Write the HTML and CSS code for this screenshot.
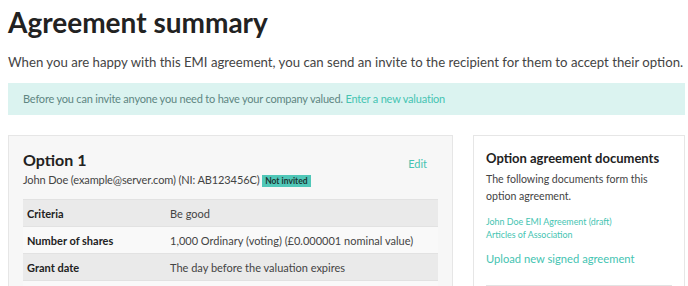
FILE: index.html
```html
<!DOCTYPE html>
<html>
<head>
<meta charset="utf-8">
<link rel="stylesheet" href="styles.css">
</head>
<body>
<div class="page">
  <h1 class="title">Agreement summary</h1>
  <p class="lead">When you are happy with this EMI agreement, you can send an invite to the recipient for them to accept their option.</p>
  <div class="alert">Before you can invite anyone you need to have your company valued. <a class="link" href="#">Enter a new valuation</a></div>
  <div class="columns">
    <div class="panel main">
      <div class="panel-head">
        <div>
          <h2 class="option-title">Option 1</h2>
          <div class="person">John Doe (example@server.com) (NI: AB123456C) <span class="badge">Not invited</span></div>
        </div>
        <a class="link edit" href="#">Edit</a>
      </div>
      <table class="details">
        <tr class="odd"><th>Criteria</th><td>Be good</td></tr>
        <tr class="even"><th>Number of shares</th><td>1,000 Ordinary (voting) (£0.000001 nominal value)</td></tr>
        <tr class="odd"><th>Grant date</th><td>The day before the valuation expires</td></tr>
        <tr class="even"><th>Exercise price</th><td>£0.01</td></tr>
      </table>
    </div>
    <div class="panel side">
      <h3 class="side-title">Option agreement documents</h3>
      <p class="side-text">The following documents form this option agreement.</p>
      <div class="docs">
        <a class="link small" href="#">John Doe EMI Agreement (draft)</a>
        <a class="link small" href="#">Articles of Association</a>
      </div>
      <a class="link upload" href="#">Upload new signed agreement</a>
      <hr class="rule">
    </div>
  </div>
</div>
</body>
</html>
```
FILE: styles.css
```css
* { box-sizing: border-box; }
html, body { margin: 0; padding: 0; background: #fff; }
body { font-family: Lato, "Open Sans", sans-serif; color: #333; overflow: hidden; }
.page { padding: 0 3px 0 8px; }
.title { margin: 0; padding-top: 5px; font-size: 28px; line-height: 34px; font-weight: 700; color: #222; }
.lead { margin: 14px 0 0; font-size: 13.2px; line-height: 18px; color: #444; }
.alert { margin-top: 12px; background: #dbf3f0; color: #5e8682; font-size: 11px; line-height: 16px; letter-spacing: -0.2px; padding: 8px 15px; }
.link { color: #45c4b2; text-decoration: none; }
.columns { display: flex; gap: 20px; margin-top: 20px; align-items: flex-start; }
.panel { border: 1px solid #e6e6e6; }
.main { width: 445px; background: #f7f7f7; padding: 14px 14px 0 14px; }
.side { flex: 1; background: #fff; padding: 14px 12px 0 12px; }
.panel-head { display: flex; justify-content: space-between; align-items: flex-start; }
.option-title { margin: 0; font-size: 16px; line-height: 20px; font-weight: 700; color: #222; }
.person { font-size: 11px; line-height: 16px; letter-spacing: -0.12px; color: #444; margin-top: 2px; }
.badge { display: inline-block; background: #50c7b8; color: #1d3633; font-size: 8.5px; font-weight: 700; line-height: 12px; padding: 0 3px; letter-spacing: 0; vertical-align: 0; }
.edit { font-size: 11px; line-height: 16px; margin-top: 6px; margin-right: 11px; }
.details { width: 100%; border-collapse: collapse; margin-top: 11px; font-size: 11px; }
.details th { text-align: left; font-weight: 700; color: #222; width: 143px; padding: 0 4px; height: 27px; border-top: 1px solid #e2e2e2; }
.details td { color: #444; padding: 0 4px; height: 27px; border-top: 1px solid #e2e2e2; }
.details tr.odd { background: #eaeaea; }
.details tr.even { background: #f9f9f9; }
.side-title { margin: 0; font-size: 13px; line-height: 16px; font-weight: 700; color: #222; }
.side-text { margin: 5px 0 0; font-size: 10.6px; line-height: 17px; color: #444; }
.docs { margin-top: 10px; display: flex; flex-direction: column; }
.small { font-size: 8.9px; line-height: 13px; }
.upload { display: block; margin-top: 10px; font-size: 11.2px; line-height: 16px; }
.rule { border: 0; border-top: 1px solid #e3e3e3; margin: 18px 0 0; }
```
